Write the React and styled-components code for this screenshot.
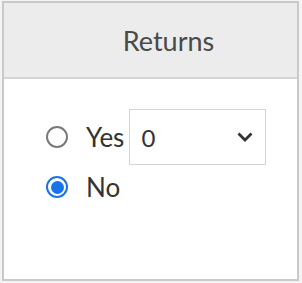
import styled, { createGlobalStyle } from "styled-components";

const GlobalStyle = createGlobalStyle`
  body {
    margin: 0;
    background: #ffffff;
    font-family: Lato, "Liberation Sans", sans-serif;
  }
`;

const Page = styled.div`
  width: 302px;
  height: 283px;
  padding: 1px 3px 2px 2px;
  box-sizing: border-box;
  background: #f4f4f4;
`;

const Card = styled.div`
  height: 100%;
  box-sizing: border-box;
  border: 2px solid #c9c9c9;
  background: #ffffff;
  display: flex;
  flex-direction: column;
`;

const Header = styled.div`
  height: 74px;
  flex: none;
  background: #ececec;
  border-bottom: 2px solid #d6d6d6;
  display: flex;
  align-items: center;
  justify-content: center;
  padding-left: 36px;
  font-size: 27px;
  color: #4a4a4a;
`;

const Body = styled.div`
  padding: 30px 0 0 42px;
  display: flex;
  flex-direction: column;
  gap: 4px;
`;

const Option = styled.label`
  display: flex;
  align-items: center;
  font-size: 26px;
  color: #333333;
  height: ${(p) => p.h}px;
`;

const Radio = styled.span`
  width: 22px;
  height: 22px;
  box-sizing: border-box;
  border-radius: 50%;
  border: 2px solid ${(p) => (p.checked ? "#1a73e8" : "#7a7a7a")};
  margin-right: 18px;
  display: flex;
  align-items: center;
  justify-content: center;
  &::after {
    content: "";
    width: 13px;
    height: 13px;
    border-radius: 50%;
    background: #1a73e8;
    display: ${(p) => (p.checked ? "block" : "none")};
  }
`;

const Select = styled.div`
  margin-left: 5px;
  width: 137px;
  height: 56px;
  box-sizing: border-box;
  border: 1px solid #d4d4d4;
  display: flex;
  align-items: center;
  justify-content: space-between;
  padding: 0 12px 0 11px;
  font-size: 24px;
  color: #333333;
`;

export default function App() {
  return (
    <>
      <GlobalStyle />
      <Page>
        <Card>
          <Header>Returns</Header>
          <Body>
            <Option h={56}>
              <Radio />
              Yes
              <Select>
                <span>0</span>
                <svg width="16" height="10" viewBox="0 0 16 10">
                  <path d="M1.5 1.5l6.5 6.5 6.5-6.5" fill="none" stroke="#333" strokeWidth="2.8" />
                </svg>
              </Select>
            </Option>
            <Option h={36}>
              <Radio checked />
              No
            </Option>
          </Body>
        </Card>
      </Page>
    </>
  );
}
